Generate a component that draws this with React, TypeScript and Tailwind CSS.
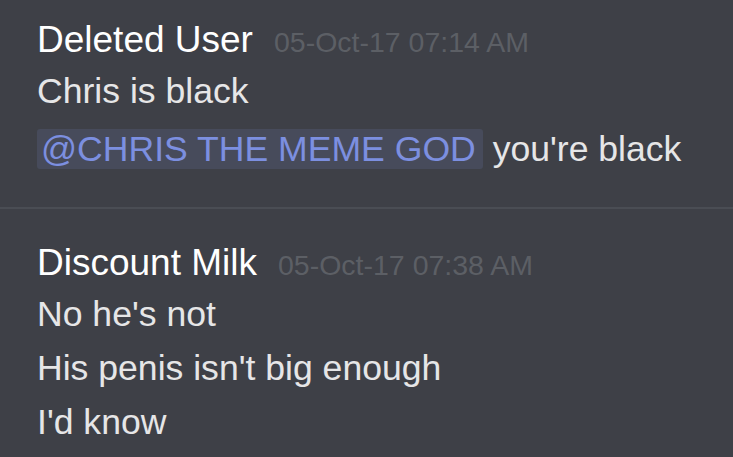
type Message = {
  author: string;
  time: string;
  lines: React.ReactNode[];
};

const messages: Message[] = [
  {
    author: "Deleted User",
    time: "05-Oct-17 07:14 AM",
    lines: [
      "Chris is black",
      <>
        <span className="bg-[#474b5b] text-[#7c8fe0] pl-[4px] pr-[7px] rounded-[3px]">
          @CHRIS THE MEME GOD
        </span>{" "}
        you're black
      </>,
    ],
  },
  {
    author: "Discount Milk",
    time: "05-Oct-17 07:38 AM",
    lines: ["No he's not", "His penis isn't big enough", "I'd know"],
  },
];

function MessageGroup({ msg, first }: { msg: Message; first: boolean }) {
  return (
    <div className={first ? "pl-[37px] pt-[20px] pb-[31px]" : "pl-[37px] pt-[34px] pb-[20px]"}>
      <div className="flex items-baseline leading-[40px]">
        <span className="text-[37px] text-white">{msg.author}</span>
        <span className="ml-[21px] text-[28.5px] text-[#5c5f65]">{msg.time}</span>
      </div>
      <div className="mt-[2px] text-[35.6px] text-[#e6e6e7]">
        {msg.lines.map((line, i) => (
          <div
            key={i}
            className={
              first && i === 1 ? "leading-[54px] mt-[4px] whitespace-nowrap" : "leading-[54px] whitespace-nowrap"
            }
          >
            {line}
          </div>
        ))}
      </div>
    </div>
  );
}

export default function App() {
  return (
    <div
      className="w-[733px] h-[457px] overflow-hidden bg-[#3e4047]"
      style={{ fontFamily: '"Liberation Sans", Arial, sans-serif' }}
    >
      <MessageGroup msg={messages[0]} first />
      <div className="h-[2px] bg-[#4a4d54]" />
      <MessageGroup msg={messages[1]} first={false} />
    </div>
  );
}
